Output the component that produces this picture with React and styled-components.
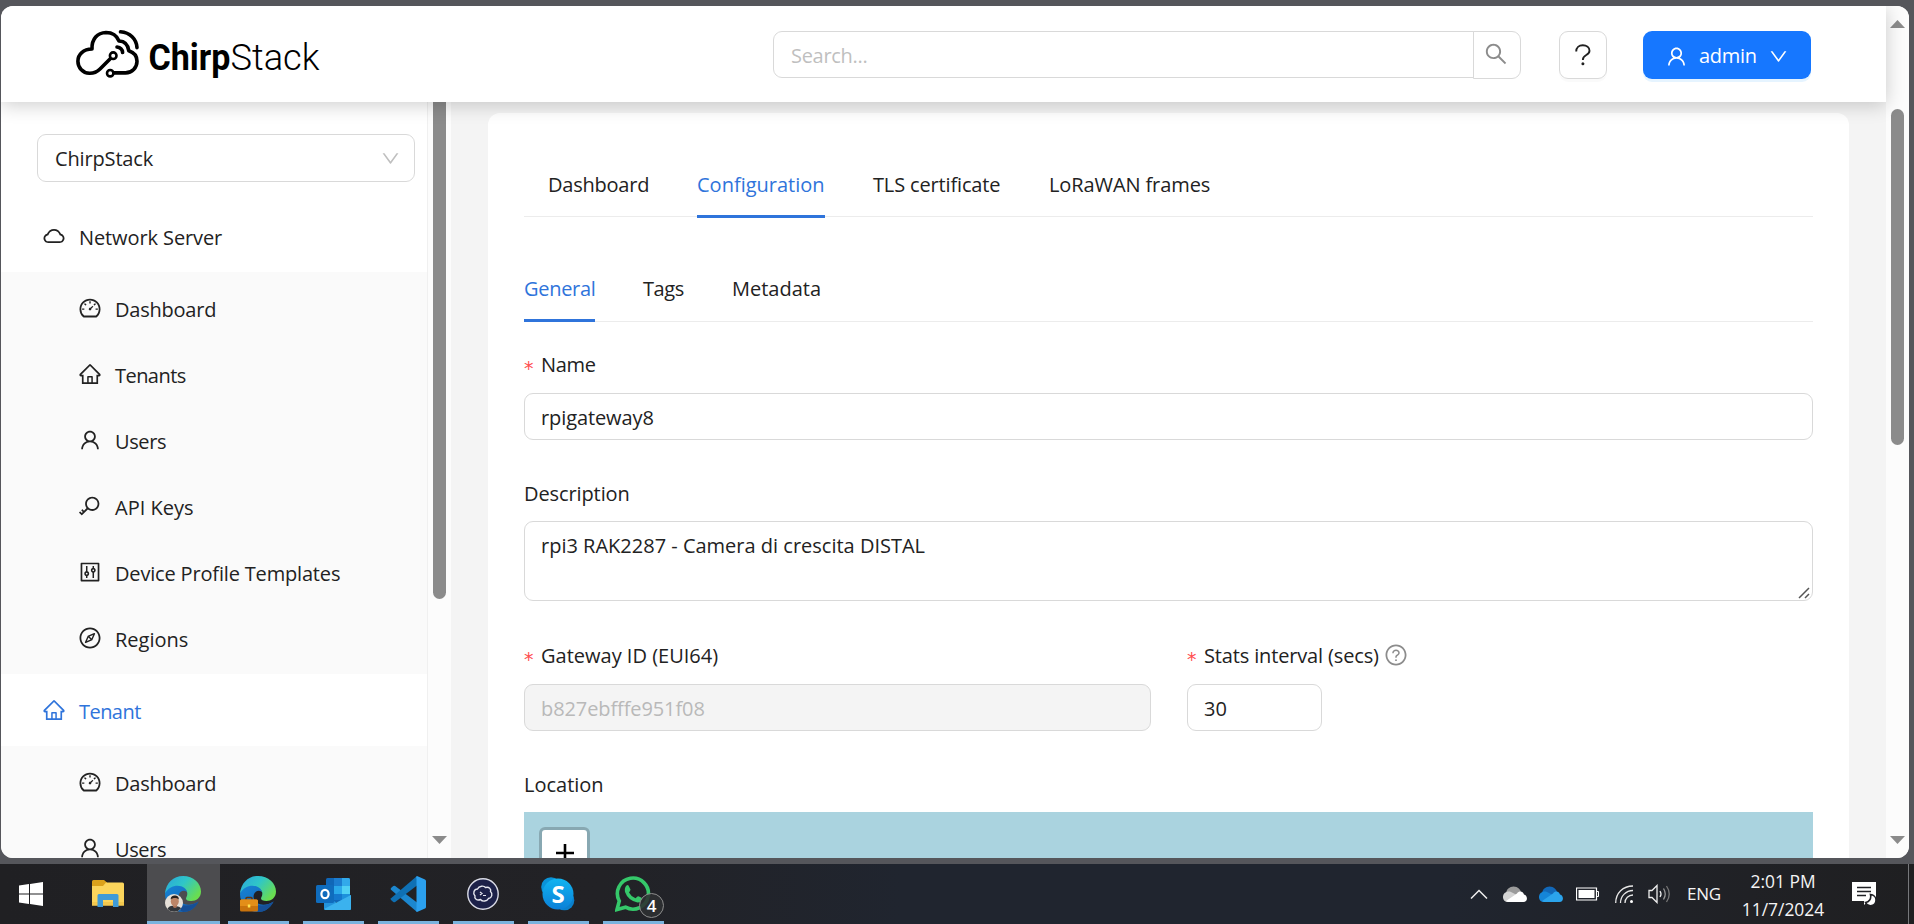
import React from 'react';
import styled, { createGlobalStyle, css } from 'styled-components';
import {
  AiOutlineCloud, AiOutlineDashboard, AiOutlineHome, AiOutlineUser, AiOutlineKey,
  AiOutlineControl, AiOutlineCompass, AiOutlineDown, AiOutlineQuestionCircle, AiOutlineSearch,
} from 'react-icons/ai';

const Global = createGlobalStyle`
  * { box-sizing: border-box; }
  html, body { margin: 0; padding: 0; overflow: hidden; }
  body { font-family: 'Open Sans', 'Noto Sans', sans-serif; font-size: 20px; color: #222; }
  svg { display: block; flex: none; }
`;

const Desktop = styled.div`
  width: 1914px; height: 924px; background: #55565b;
  display: flex; flex-direction: column; overflow: hidden;
`;
const Browser = styled.div`
  margin: 6px 5px 6px 1px; height: 852px; flex: none; display: flex;
  background: #fff; border-radius: 12px; overflow: hidden;
`;
const Page = styled.div`
  width: 1885px; height: 852px; flex: none; display: flex; flex-direction: column;
`;
const Text = styled.span`
  white-space: pre; letter-spacing: ${p => p.$ls || 0}px; line-height: 30px;
`;

/* header */
const Header = styled.header`
  height: 96px; flex: none; background: #fff; display: flex; align-items: flex-start;
  padding: 25px 75px 0 75px; position: relative; z-index: 2;
  box-shadow: 0 3px 18px rgba(0,0,0,.2);
`;
const Logo = styled.div`
  display: flex; width: 250px; height: 50px; margin-top: -2px;
`;
const SearchBox = styled.div`
  margin-left: auto; display: flex; width: 748px; height: 48px;
`;
const SearchInput = styled.div`
  width: 701px; height: 47px; border: 1px solid #d9d9d9; border-radius: 9px 0 0 9px;
  padding: 11px 17px 9px; color: #bfbfbf; display: flex; align-items: center;
`;
const SearchButton = styled.div`
  width: 48px; height: 48px; margin-left: -1px; border: 1px solid #d9d9d9;
  border-radius: 0 9px 9px 0; display: flex; align-items: center; justify-content: center;
  color: #8c8c8c; padding: 0 2px 3px 0;
`;
const HelpButton = styled.div`
  width: 48px; height: 48px; margin-left: 38px; border: 1px solid #d9d9d9; border-radius: 9px;
  display: flex; align-items: center; justify-content: center; box-shadow: 0 3px 0 rgba(0,0,0,.02);
`;
const AdminButton = styled.div`
  width: 168px; height: 48px; margin-left: 36px; border-radius: 9px; background: #1677ff;
  color: #fff; display: flex; align-items: center; padding: 2px 22px 0; box-shadow: 0 3px 0 rgba(5,145,255,.1);
  & > span { margin: 0 11px 0 11px; }
`;

/* sidebar */
const Body = styled.div`
  flex: 1; min-height: 0; display: flex;
`;
const Sidebar = styled.aside`
  width: 427px; flex: none; border-right: 1px solid #f0f0f0; display: flex; flex-direction: column;
  overflow: hidden;
`;
const Select = styled.div`
  margin: 32px 0 18px 36px; width: 378px; height: 48px; flex: none; border: 1px solid #d9d9d9; border-radius: 9px;
  display: flex; align-items: center; justify-content: space-between; padding: 1px 13px 0 17px;
  & > svg { color: #bfbfbf; }
`;
const rowText = css`display: flex; align-items: center; gap: 13px; height: 60px; flex: none; padding-top: 3px;
  & > svg { margin-top: -4px; }`;
const MenuTitle = styled.div`
  ${rowText} margin: 6px 0; padding-left: 41px; color: ${p => (p.$active ? '#2f74db' : '#222')};
`;
const SubMenu = styled.div`
  background: #fafafa; display: flex; flex-direction: column; gap: 6px; padding: 6px 0; flex: none;
`;
const MenuItem = styled.div`
  ${rowText} padding-left: 77px;
`;
const SideScroll = styled.div`
  width: 23px; flex: none; background: #fcfcfc; display: flex; flex-direction: column;
  align-items: center; padding: 0 0 14px 0; justify-content: space-between;
`;
const SideThumb = styled.div`
  width: 13px; height: 497px; background: #8b8b8b; border-radius: 0 0 7px 7px;
`;

/* main area */
const Main = styled.main`
  flex: 1; background: #f4f4f4; padding: 11px 37px 0 37px; overflow: hidden;
`;
const Card = styled.section`
  width: 1361px; height: 800px; background: #fff; border-radius: 12px; padding: 36px;
`;
const Tabs = styled.nav`
  display: flex; gap: 48px; height: ${p => p.$h}px; padding-left: ${p => p.$pad || 0}px;
  border-bottom: 1px solid #ececec;
`;
const Tab = styled.div`
  height: ${p => p.$h}px; padding-top: ${p => p.$top}px; width: ${p => p.$w}px;
  color: ${p => (p.$active ? '#2f74db' : '#222')};
  border-bottom: 3px solid ${p => (p.$active ? '#2f74db' : 'transparent')};
`;
const Field = styled.div`
  display: flex; flex-direction: column; padding-top: ${p => p.$top}px; width: ${p => p.$w || 1289}px;
`;
const Label = styled.div`
  display: flex; align-items: center; height: 30px; margin-bottom: ${p => (p.$required ? 13 : 12)}px;
  white-space: nowrap;
`;
const Star = styled.span`
  color: #ff4d4f; width: 17px; flex: none; font-family: 'DejaVu Sans Mono', monospace; font-size: 19px;
  line-height: 30px; padding-top: 6px; text-indent: -1px;
`;
const Input = styled.div`
  height: ${p => p.$h || 47}px; border: 1px solid #d9d9d9; border-radius: 9px; padding: 9px 17px 0 16px;
  background: ${p => (p.$disabled ? '#f4f4f4' : '#fff')}; color: ${p => (p.$disabled ? '#b9b9b9' : '#222')};
  position: relative;
`;
const Grip = styled.svg`
  position: absolute; right: 1px; bottom: 0;
`;
const Row = styled.div`
  display: flex; gap: 36px;
`;
const HelpIcon = styled(AiOutlineQuestionCircle)`
  color: #8c8c8c; margin: -2px 0 0 5px;
`;
const Map = styled.div`
  height: 120px; background: #aad3df; padding: 15px;
`;
const ZoomIn = styled.div`
  width: 51px; height: 60px; border: 3px solid rgba(0,0,0,.2); border-radius: 6px;
  background: #fff; background-clip: padding-box; display: flex; justify-content: center; padding-top: 13px;
`;

const PageScroll = styled.div`
  flex: 1; background: #fcfcfc; display: flex; flex-direction: column; align-items: center; padding: 14px 0 14px;
`;
const PageThumb = styled.div`
  width: 13px; height: 336px; margin-top: 81px; margin-bottom: auto; border-radius: 7px; background: #8b8b8b;
`;

/* taskbar */
const Taskbar = styled.footer`
  height: 60px; flex: none; display: flex; justify-content: space-between;
  background: linear-gradient(90deg, #202023 0, #222226 600px, #20252f 900px, #20252f 1450px, #202125 1750px, #1f1f21 1914px);
`;
const Apps = styled.div`
  display: flex; gap: 2px;
`;
const TaskButton = styled.div`
  width: ${p => p.$w || 73}px; height: 60px; display: flex; flex-direction: column; align-items: center;
  background: ${p => (p.$active ? '#4c4c4f' : 'transparent')}; position: relative;
  &::after { content: ''; width: ${p => (p.$active ? 73 : 61)}px; height: 3px; flex: none;
    background: ${p => (p.$open ? '#7bb3de' : 'transparent')}; }
`;
const AppIcon = styled.div`
  flex: 1; display: flex; align-items: center; justify-content: center; padding: 2px 1px 0 0;
`;
const Badge = styled.span`
  position: absolute; left: 42px; top: 29px; width: 25px; height: 25px; border-radius: 50%;
  border: 1px solid #8d8d8d; background: rgba(45,48,50,.88); color: #fff; font-size: 17px; font-weight: 600;
  display: flex; align-items: center; justify-content: center; line-height: 1;
`;
const Tray = styled.div`
  display: flex; align-items: center; width: 444px; color: #f4f4f4; font-size: 17px;
`;
const Clock = styled.div`
  display: flex; flex-direction: column; align-items: center; width: 86px; margin-left: 19px; padding-top: 2px;
  font-size: 17.4px;
  & > span { line-height: 28px; }
`;
const ShowDesktop = styled.div`
  width: 1px; height: 60px; background: #77787b; margin-left: 31px;
`;

const ChirpLogo = () => (
  <svg width="250" height="50" viewBox="0 0 250 50" fill="none">
    <g stroke="#000" strokeWidth="3.6" strokeLinecap="round" strokeLinejoin="round">
      <path d="M34.5 29.5 L24 40 C20.5 43.4 17 44.4 13.500 44.300 C6.500 43.800 1.900 38.500 1.900 32.200 C1.900 25.300 7.500 20.200 16 20 C15.600 9.500 21.500 3.800 30 3.500 C36.500 3.500 41 7 43 12 C48.500 12.200 52 15.500 52.800 21.800 C58 23.500 61 27.300 61 32.300 C61 38.800 56 43.900 49.500 43.900 L38 43.900" />
      <path d="M44.500 2.800 C54 3.500 60.500 10 61 18.600" />
      <path d="M41 18 C44.500 18.400 46.300 20.500 46.600 23.500" />
      <circle cx="37.200" cy="26.700" r="3.300" strokeWidth="2.600" fill="#fff" />
      <circle cx="34.200" cy="44.200" r="3.200" strokeWidth="2.600" fill="#fff" />
    </g>
    <text x="72.500" y="40.500" fontFamily="Roboto, sans-serif" fontSize="37" fontWeight="700" fill="#000" textLength="82" lengthAdjust="spacingAndGlyphs">Chirp</text>
    <text x="154.500" y="40.500" fontFamily="Roboto, sans-serif" fontSize="37" fontWeight="300" fill="#000" textLength="89" lengthAdjust="spacingAndGlyphs">Stack</text>
  </svg>
);
const Arrow = ({ up }) => (
  <svg width="15" height="8"><path d={up ? 'M0 8 7.500 0 15 8Z' : 'M0 0 7.500 8 15 0Z'} fill="#8b8b8b" /></svg>
);
const Windows = () => (
  <svg width="24" height="24" fill="#fff"><path d="M0 3.500 10 2V11.500H0ZM11 1.900 24 0V11.500H11ZM0 12.500H10V22L0 20.500ZM11 12.500H24V24L11 22.100Z" /></svg>
);
const Folder = () => (
  <svg width="32" height="28">
    <path d="M0 1.500Q0 0 1.500 0H12L15 2.500V8H0Z" fill="#dba21c" />
    <path d="M0 6H11L14 2.500H30.500Q32 2.500 32 4V25.500H0Z" fill="#fbd55c" />
    <path d="M0 25.500H32V22H0Z" fill="#f3c84e" />
    <path d="M5.500 27V15.500Q5.500 14 7 14H25Q26.500 14 26.500 15.500V27H21V20H11V27Z" fill="#3f9bd8" />
  </svg>
);
const Edge = ({ id, children }) => (
  <svg width="36" height="36" viewBox="0 0 36 36">
    <defs>
      <linearGradient id={id + 'a'} x1="0" y1="0" x2="1" y2=".6"><stop offset="0" stopColor="#2aa5dc" /><stop offset=".5" stopColor="#2fc6c8" /><stop offset="1" stopColor="#69dd50" /></linearGradient>
      <linearGradient id={id + 'b'} x1="0" y1="0" x2=".8" y2="1"><stop offset="0" stopColor="#1684d6" /><stop offset="1" stopColor="#1463b4" /></linearGradient>
    </defs>
    <path d="M0 18C1 10 8 7.500 13 8.500C21 9.500 22 14 22 16C17 12 12 18 14 23C16 29 25 31 33.500 25.500C30 32 25 36 18 36C8 36 0 28 0 18Z" fill={`url(#${id}b)`} />
    <path d="M12 21C12 30 23 32.500 33.800 25.500C30 33 24 36 18 36C12 33 11 26 12 21Z" fill="#164f96" />
    <path d="M0 17.500C1 7 8.500 0 18 0C28.500 0 36 7.500 36 15.500C36 22 31 25 26.500 25C22 25 20 23.500 21.500 21C23 18.500 22.500 14.500 19.500 12C14 7.500 4 9.500 0 17.500Z" fill={`url(#${id}a)`} />
    {children}
  </svg>
);
const Avatar = () => (
  <g>
    <circle cx="9" cy="27" r="9" fill="#e6e0d8" />
    <path d="M2.500 33C4 29.500 7 29.500 9.500 30C13 30 15.500 31 16 32.500A9 9 0 0 1 2.500 33Z" fill="#34373b" />
    <path d="M8 28H12V31Q10 33 8 31Z" fill="#a87257" />
    <ellipse cx="9.800" cy="25.300" rx="4" ry="4.900" fill="#bd8668" />
    <path d="M5.800 23.500C5 18.500 14.500 18 13.800 23.500C12.500 21.500 7.500 21.500 5.800 23.500Z" fill="#2a211e" />
  </g>
);
const Briefcase = () => (
  <g>
    <path d="M6 24V22.500Q6 21.500 7 21.500H11Q12 21.500 12 22.500V24" stroke="#593514" strokeWidth="1.500" fill="none" />
    <rect x="0" y="23.500" width="18" height="12" rx="1.500" fill="#c9730c" />
    <path d="M0 30H18V25Q18 23.500 16.500 23.500H1.500Q0 23.500 0 25Z" fill="#e38e18" />
    <rect x="7.800" y="28.500" width="2.500" height="3" fill="#ffe34f" />
  </g>
);
const Outlook = () => (
  <svg width="35" height="32">
    <rect x="10" y="0" width="24" height="24" rx="1.500" fill="#1067b8" />
    <path d="M18 0H26V8H18Z" fill="#1c7dd0" /><path d="M26 0H32.500Q34 0 34 1.500V8H26Z" fill="#32a9ea" />
    <path d="M18 8H26V16H18Z" fill="#2aa8ea" /><path d="M26 8H34V16H26Z" fill="#50d0f4" />
    <path d="M18 16H26V22H18Z" fill="#1478ce" /><path d="M26 16H34V22H26Z" fill="#1d90dc" />
    <path d="M8 17 22 25.500 35 17V30.500Q35 32 33.500 32H9.500Q8 32 8 30.500Z" fill="#2393dc" />
    <path d="M8 31 35 17V30.500Q35 32 33.500 32H9.500Z" fill="#3bb2ee" />
    <rect x="0" y="7" width="18" height="18" rx="1.500" fill="#0f6cbd" />
    <ellipse cx="9" cy="16" rx="3.600" ry="4.200" fill="none" stroke="#fff" strokeWidth="2.200" />
  </svg>
);
const VSCode = () => (
  <svg width="36" height="36" viewBox="0 0 36 36">
    <path d="M1 12 3.300 10Q4.200 9.300 5.200 10L27 26.500V36L1 13.800Q.2 12.900 1 12Z" fill="#1c87cf" />
    <path d="M1 24 3.300 26Q4.200 26.700 5.200 26L27 9.500V0L1 22.200Q.2 23.100 1 24Z" fill="#0f70b4" />
    <path d="M27 0 35 3.500Q36 4 36 5V31Q36 32 35 32.500L27 36Q25.500 35.500 26.500 33V3Q25.500 .5 27 0Z" fill="#2ba0ee" />
  </svg>
);
const Terminal = () => (
  <svg width="32" height="32" fill="none">
    <circle cx="16" cy="16" r="15.200" fill="#1c2149" stroke="#d9dbe6" strokeWidth="1.400" />
    <path d="M10.500 11C12 7.500 17 7.500 18.500 9.500C22 8.500 24.500 11 23.500 13.500C26 15.500 25 20 21.500 20.500C20 23.500 15.500 24 13.500 21.500C10 23 7 20.500 8 18C5.500 15.500 7 11 10.500 11Z" stroke="#e6e8f0" strokeWidth="1.400" />
    <path d="M13 14 15 15.500 13 17M16 17.500H19" stroke="#e6e8f0" strokeWidth="1.200" />
  </svg>
);
const SkypeText = styled.text`
  font: 700 24px 'Open Sans', sans-serif; fill: #fff;
`;
const Skype = () => (
  <svg width="34" height="34">
    <defs><linearGradient id="sky" x1="0" y1="0" x2="0" y2="1"><stop offset="0" stopColor="#10b4f0" /><stop offset="1" stopColor="#0b80d8" /></linearGradient></defs>
    <circle cx="10" cy="10" r="9.800" fill="#0a93d8" /><circle cx="23.500" cy="23.500" r="9.800" fill="#0a80cc" />
    <circle cx="17" cy="17" r="15.500" fill="url(#sky)" />
    <SkypeText x="10.500" y="25.500">S</SkypeText>
  </svg>
);
const WhatsApp = () => (
  <svg width="37" height="37" viewBox="0 0 37 37">
    <path d="M2 34.500 4.300 26A15.500 15.500 0 1 1 10.500 32.200Z" fill="none" stroke="#35c86a" strokeWidth="3.600" strokeLinejoin="miter" />
    <path d="M13.500 10.500 15.500 14.500Q15.500 15.500 14 17.500Q16 21.500 20.500 23.300L22.500 21.500Q23 21 24 21.500L27.500 23.200Q27.500 27.500 22.500 27.500Q13 25.500 10 17Q9.200 12.500 11.500 10.500Q12.500 9.700 13.500 10.500Z" fill="#35c86a" />
  </svg>
);
const CloudIcon = ({ back, mid, front }) => (
  <svg width="24" height="16">
    <path d="M3 8C3 2 9 -1 13.500 1C16 2 17.500 4 18 6L12 12Z" fill={back} />
    <path d="M0 11C0 7 4 4.500 8 6L18 11 12 16H5C2 16 0 14 0 11Z" fill={mid} />
    <path d="M3 15 14 7.500C16 4.500 20 5 21 8.500C25 9.500 25 16 20.500 16H5Z" fill={front} />
  </svg>
);
const Spacer = styled.i`
  width: ${p => p.$w}px; flex: none;
`;

const serverItems = [
  [AiOutlineDashboard, 'Dashboard', -0.22], [AiOutlineHome, 'Tenants', -0.55], [AiOutlineUser, 'Users', -0.4],
  [AiOutlineKey, 'API Keys', 0], [AiOutlineControl, 'Device Profile Templates', -0.17], [AiOutlineCompass, 'Regions', 0],
];
const Items = ({ items }) => (
  <SubMenu>
    {items.map(([Icon, name, ls]) => (
      <MenuItem key={name}><Icon size={24} /><Text $ls={ls}>{name}</Text></MenuItem>
    ))}
  </SubMenu>
);

export default function App() {
  return (
    <Desktop>
      <Global />
      <Browser>
        <Page>
          <Header>
            <Logo><ChirpLogo /></Logo>
            <SearchBox>
              <SearchInput><Text $ls={-0.3}>Search...</Text></SearchInput>
              <SearchButton><AiOutlineSearch size={26} /></SearchButton>
            </SearchBox>
            <HelpButton>
              <svg width="16" height="22" fill="none"><path d="M1.200 7.500C1.200 3.500 4 1.200 7.800 1.200S14.500 3.500 14.500 6.800C14.500 11.500 7.900 10.500 7.900 15.500V16" stroke="#222" strokeWidth="1.900" /><circle cx="7.900" cy="19.700" r="1.500" fill="#222" /></svg>
            </HelpButton>
            <AdminButton><AiOutlineUser size={23} /><Text $ls={-0.3}>admin</Text><AiOutlineDown size={21} /></AdminButton>
          </Header>
          <Body>
            <Sidebar>
              <Select><Text $ls={-0.15}>ChirpStack</Text><AiOutlineDown size={21} /></Select>
              <MenuTitle><AiOutlineCloud size={24} /><Text $ls={-0.1}>Network Server</Text></MenuTitle>
              <Items items={serverItems} />
              <MenuTitle $active><AiOutlineHome size={24} /><Text $ls={-0.55}>Tenant</Text></MenuTitle>
              <Items items={[serverItems[0], serverItems[2]]} />
            </Sidebar>
            <SideScroll><SideThumb /><Arrow /></SideScroll>
            <Main>
              <Card>
                <Tabs $h={68} $pad={24}>
                  <Tab $h={69} $top={21} $w={101}><Text $ls={-0.22}>Dashboard</Text></Tab>
                  <Tab $h={69} $top={21} $w={128} $active><Text>Configuration</Text></Tab>
                  <Tab $h={69} $top={21} $w={128}><Text $ls={-0.15}>TLS certificate</Text></Tab>
                  <Tab $h={69} $top={21} $w={163}><Text $ls={-0.1}>LoRaWAN frames</Text></Tab>
                </Tabs>
                <Tabs $h={105}>
                  <Tab $h={105} $top={57} $w={71} $active><Text $ls={-0.3}>General</Text></Tab>
                  <Tab $h={105} $top={57} $w={41}><Text $ls={-0.4}>Tags</Text></Tab>
                  <Tab $h={105} $top={57} $w={88}><Text>Metadata</Text></Tab>
                </Tabs>
                <Field $top={28}>
                  <Label $required><Star>*</Star><Text $ls={-0.3}>Name</Text></Label>
                  <Input><Text $ls={-0.1}>rpigateway8</Text></Input>
                </Field>
                <Field $top={39}>
                  <Label><Text $ls={-0.1}>Description</Text></Label>
                  <Input $h={80}>
                    <Text>rpi3 RAK2287 - Camera di crescita DISTAL</Text>
                    <Grip width="14" height="14" fill="none" stroke="#555" strokeWidth="1.500"><path d="M2 12 12 2M8 12 12 8" /></Grip>
                  </Input>
                </Field>
                <Row>
                  <Field $top={40} $w={627}>
                    <Label $required><Star>*</Star><Text>Gateway ID (EUI64)</Text></Label>
                    <Input $disabled><Text $ls={-0.1}>b827ebfffe951f08</Text></Input>
                  </Field>
                  <Field $top={40} $w={135}>
                    <Label $required><Star>*</Star><Text $ls={-0.15}>Stats interval (secs)</Text><HelpIcon size={24} /></Label>
                    <Input><Text>30</Text></Input>
                  </Field>
                </Row>
                <Field $top={39}>
                  <Label><Text>Location</Text></Label>
                  <Map><ZoomIn><svg width="20" height="20"><path d="M1 10H19M10 1V19" stroke="#000" strokeWidth="2.600" /></svg></ZoomIn></Map>
                </Field>
              </Card>
            </Main>
          </Body>
        </Page>
        <PageScroll><Arrow up /><PageThumb /><Arrow /></PageScroll>
      </Browser>
      <Taskbar>
        <Apps>
          <TaskButton $w={62}><AppIcon><Windows /></AppIcon></TaskButton>
          <Spacer $w={6} />
          <TaskButton><AppIcon><Folder /></AppIcon></TaskButton>
          <TaskButton $open $active><AppIcon><Edge id="e1"><Avatar /></Edge></AppIcon></TaskButton>
          <TaskButton $open><AppIcon><Edge id="e2"><Briefcase /></Edge></AppIcon></TaskButton>
          <TaskButton $open><AppIcon><Outlook /></AppIcon></TaskButton>
          <TaskButton $open><AppIcon><VSCode /></AppIcon></TaskButton>
          <TaskButton $open><AppIcon><Terminal /></AppIcon></TaskButton>
          <TaskButton $open><AppIcon><Skype /></AppIcon></TaskButton>
          <TaskButton $open><AppIcon><WhatsApp /></AppIcon><Badge>4</Badge></TaskButton>
        </Apps>
        <Tray>
          <svg width="18" height="10" fill="none"><path d="M1 9.500 9 1.500 17 9.500" stroke="#eee" strokeWidth="1.500" /></svg>
          <Spacer $w={15} />
          <CloudIcon back="#9b9b9b" mid="#d4d4d4" front="#fff" />
          <Spacer $w={12} />
          <CloudIcon back="#1268b8" mid="#1585d8" front="#2ba4ec" />
          <Spacer $w={13} />
          <svg width="23" height="14" fill="none"><path d="M.5 1H20.500V13H.5Z" stroke="#fff" strokeWidth="1.200" /><path d="M2.500 3H18.500V11H2.500Z" fill="#fff" /><path d="M21 4.500H22.500V9.500H21" stroke="#fff" /></svg>
          <Spacer $w={16} />
          <svg width="19" height="19" fill="none" stroke="#e8e8e8" strokeWidth="1.300"><path d="M.7 18C.7 8 8 1 18 1M5.500 18C5.500 11 11 5.500 18 5.500M10 18C10 13.500 13.500 10 18 10" /><circle cx="16.500" cy="16.500" r="1.500" fill="#fff" stroke="none" /></svg>
          <Spacer $w={14} />
          <svg width="23" height="20" fill="none" stroke="#eee" strokeWidth="1.300"><path d="M1 6.500H4L9 1.500V18.500L4 13.500H1Z" /><path d="M12 7Q14 10 12 13" /><path d="M15.500 4.500Q19 10 15.500 15.500" stroke="#999" /><path d="M18.500 2Q24 10 18.500 18" stroke="#777" /></svg>
          <Spacer $w={16} />
          <Text $ls={-0.2}>ENG</Text>
          <Clock><Text>2:01 PM</Text><Text>11/7/2024</Text></Clock>
          <Spacer $w={26} />
          <svg width="25" height="25" fill="none"><path d="M0 0H24V19H16L12 23V19H0Z" fill="#fff" /><path d="M5 5.500H19M5 9.500H19M5 13.500H14" stroke="#202125" strokeWidth="1.300" /><path d="M18.500 12.500C19.500 17 17 20 13.500 20.500C16 25.500 24 24.500 24 18C24 15 21.500 12.800 18.500 12.500Z" fill="#fff" stroke="#202125" strokeWidth="1.600" /></svg>
          <ShowDesktop />
        </Tray>
      </Taskbar>
    </Desktop>
  );
}
